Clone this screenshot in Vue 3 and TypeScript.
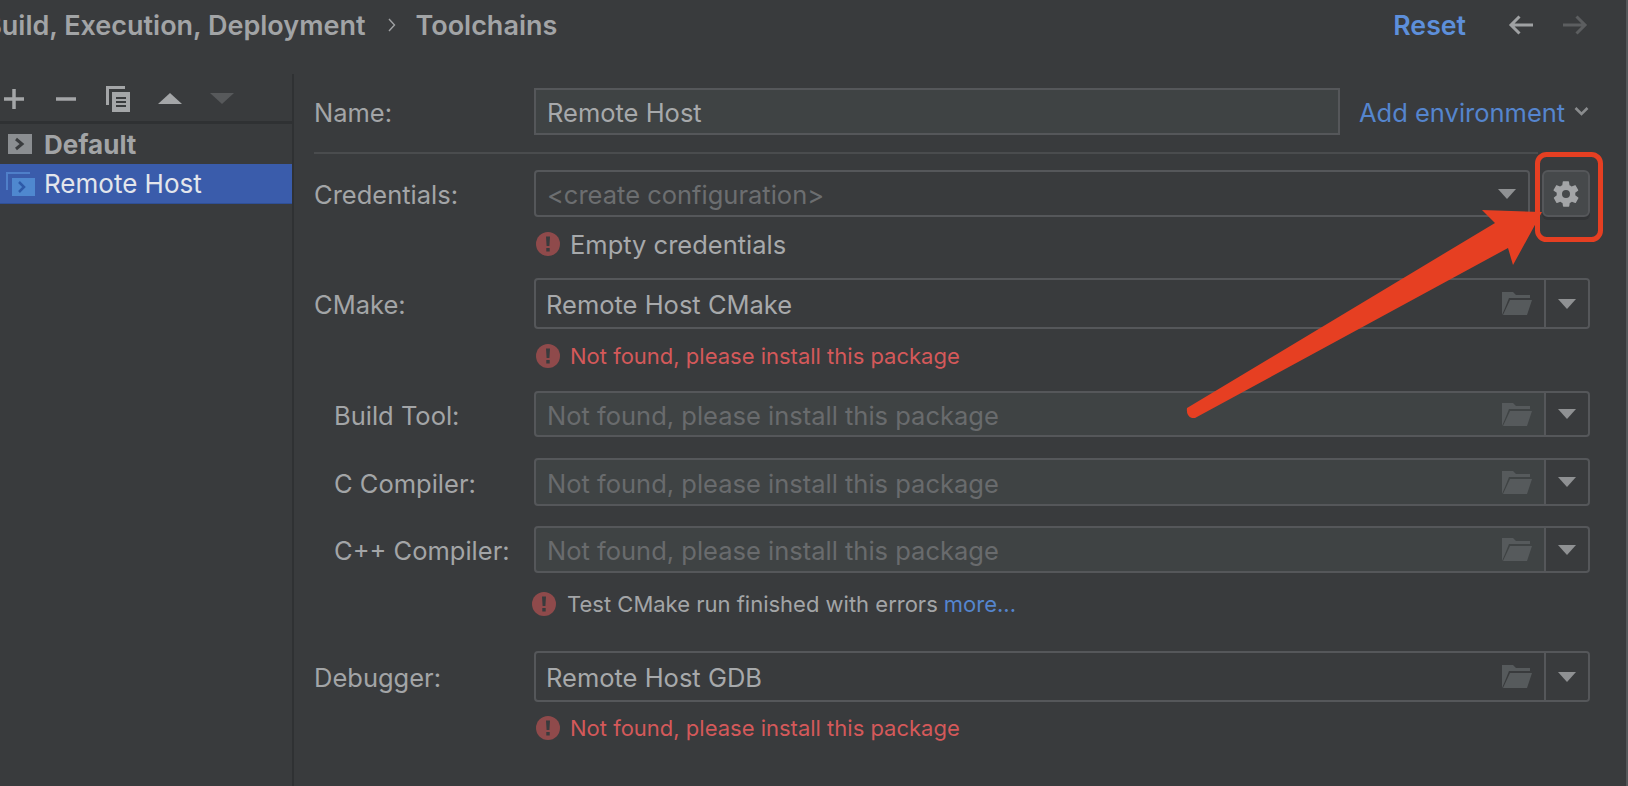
<script setup lang="ts">
interface Field {
  label: string
  cls: string
  value?: string
  placeholder?: string
  msg?: string
}
const fields: Field[] = [
  { label: 'CMake:', cls: 'f-cmake', value: 'Remote Host CMake', msg: 'Not found, please install this package' },
  { label: 'Build Tool:', cls: 'f-build', placeholder: 'Not found, please install this package' },
  { label: 'C Compiler:', cls: 'f-c', placeholder: 'Not found, please install this package' },
  { label: 'C++ Compiler:', cls: 'f-cpp', placeholder: 'Not found, please install this package' },
]
const debuggerField: Field = { label: 'Debugger:', cls: 'f-debug', value: 'Remote Host GDB', msg: 'Not found, please install this package' }
</script>

<template>
  <div class="page">
    <header class="top">
      <div class="crumbs">
        <span>Build, Execution, Deployment</span>
        <svg class="crumb-sep" width="10" height="16" viewBox="0 0 10 16"><path d="M2 2l5.500 6L2 14" fill="none" stroke="#a0a2a4" stroke-width="1.400"/></svg>
        <span class="crumb-last">Toolchains</span>
      </div>
      <div class="top-right">
        <span class="reset">Reset</span>
        <svg class="back" width="26" height="22" viewBox="0 0 26 22"><path d="M25 11H3M11.500 2.500L3 11l8.500 8.500" fill="none" stroke="#9fa1a3" stroke-width="3"/></svg>
        <svg class="fwd" width="26" height="22" viewBox="0 0 26 22"><path d="M1 11h22M14.500 2.500L23 11l-8.500 8.500" fill="none" stroke="#5c5e60" stroke-width="3"/></svg>
      </div>
    </header>

    <div class="body">
      <aside class="side">
        <div class="toolbar">
          <svg width="20" height="20" viewBox="0 0 20 20"><path d="M10 0v20M0 10h20" stroke="#a4a6a8" stroke-width="3.500"/></svg>
          <svg class="tb-minus" width="20" height="20" viewBox="0 0 20 20"><path d="M0 10h20" stroke="#a4a6a8" stroke-width="3.500"/></svg>
          <svg class="tb-copy" width="24" height="26" viewBox="0 0 24 26"><path d="M1.500 19V1.500H19" fill="none" stroke="#a4a6a8" stroke-width="3"/><path fill-rule="evenodd" d="M6 6h18v20H6zM10 11v2h10v-2zM10 15v2h10v-2zM10 19v2h10v-2z" fill="#a4a6a8"/></svg>
          <svg class="tb-up" width="24" height="11" viewBox="0 0 24 11"><path d="M12 0l12 11H0z" fill="#a4a6a8"/></svg>
          <svg class="tb-down" width="24" height="11" viewBox="0 0 24 11"><path d="M0 0h24L12 11z" fill="#57595b"/></svg>
        </div>
        <div class="tree-row default">
          <svg width="24" height="20" viewBox="0 0 24 20"><rect width="24" height="20" fill="#8b8e91"/><path d="M8 5l6 5-6 5" fill="none" stroke="#3a3c3e" stroke-width="3"/></svg>
          <span>Default</span>
        </div>
        <div class="tree-row selected">
          <svg class="remote-icon" width="29" height="24" viewBox="0 0 29 24"><path d="M1 18V1h23" fill="none" stroke="#4f7fc9" stroke-width="2"/><rect x="6" y="6" width="23" height="18" fill="#4f88cf"/><path d="M13 10l5 5-5 5" fill="none" stroke="#2e5aa8" stroke-width="2.500"/></svg>
          <span>Remote Host</span>
        </div>
      </aside>

      <main class="form">
        <div class="row r-name">
          <label class="label">Name:</label>
          <div class="box name-box"><span class="txt">Remote Host</span></div>
          <span class="add-env txt">Add environment</span>
          <svg class="chev" width="15" height="9" viewBox="0 0 15 9"><path d="M1.500 1l6 6 6-6" fill="none" stroke="#8a8c8e" stroke-width="2.600"/></svg>
        </div>
        <div class="rule"></div>
        <div class="row r-cred">
          <label class="label">Credentials:</label>
          <div class="box cred-box">
            <span class="ph ph-cred txt">&lt;create configuration&gt;</span>
            <svg class="tri" width="18" height="10" viewBox="0 0 18 10"><path d="M0 0h18L9 10z" fill="#8f9193"/></svg>
          </div>
          <button class="gear-btn">
            <svg width="30" height="30" viewBox="0 0 24 24"><path fill="#a3a5a7" d="M19.400 13a7.600 7.600 0 0 0 0-2l2.200-1.700a.5.500 0 0 0 .1-.7l-2-3.500a.5.500 0 0 0-.6-.2l-2.600 1a7.600 7.600 0 0 0-1.700-1l-.4-2.700a.5.500 0 0 0-.5-.4h-4a.5.500 0 0 0-.5.400l-.4 2.700a7.600 7.600 0 0 0-1.700 1l-2.600-1a.5.500 0 0 0-.6.200l-2 3.500a.5.500 0 0 0 .1.700L4.600 11a7.600 7.600 0 0 0 0 2l-2.200 1.700a.5.500 0 0 0-.1.700l2 3.500c.1.200.4.300.6.200l2.600-1c.5.400 1.100.7 1.700 1l.4 2.700c0 .2.300.4.500.4h4c.2 0 .5-.2.500-.4l.4-2.700c.6-.3 1.200-.6 1.700-1l2.600 1c.2.100.5 0 .6-.2l2-3.500a.5.500 0 0 0-.1-.7zM12 15.200a3.200 3.200 0 1 1 0-6.400 3.200 3.200 0 0 1 0 6.400z"/></svg>
          </button>
        </div>
        <div class="msg m-cred">
          <svg class="err" width="24" height="24" viewBox="0 0 24 24"><circle cx="12" cy="12" r="12" fill="#8f4a4b"/><path d="M10 4.500h4L13.400 14h-2.800zM10.300 16h3.400v3.500h-3.400z" fill="#393b3d"/></svg>
          <span class="msg-neutral">Empty credentials</span>
        </div>

        <template v-for="f in fields" :key="f.label">
          <div class="row" :class="f.cls">
            <label class="label" :class="{ indented: f.placeholder }">{{ f.label }}</label>
            <div class="box path-box" :class="{ disabled: f.placeholder }">
              <span v-if="f.value" class="val txt">{{ f.value }}</span>
              <span v-else class="ph txt">{{ f.placeholder }}</span>
              <svg class="folder" width="30" height="23" viewBox="0 0 30 23"><path d="M0 23V0h11l3 3h14v3H7L3 16z" fill="#565a5c"/><path d="M8 8h22l-5 15H1z" fill="#565a5c"/></svg>
              <div class="drop"><svg width="18" height="10" viewBox="0 0 18 10"><path d="M0 0h18L9 10z" fill="#8f9193"/></svg></div>
            </div>
          </div>
          <div v-if="f.msg" class="msg msg-red m-cmake">
            <svg class="err" width="24" height="24" viewBox="0 0 24 24"><circle cx="12" cy="12" r="12" fill="#8f4a4b"/><path d="M10 4.500h4L13.400 14h-2.800zM10.300 16h3.400v3.500h-3.400z" fill="#393b3d"/></svg>
            <span>{{ f.msg }}</span>
          </div>
        </template>

        <div class="msg m-test">
          <svg class="err" width="24" height="24" viewBox="0 0 24 24"><circle cx="12" cy="12" r="12" fill="#8f4a4b"/><path d="M10 4.500h4L13.400 14h-2.800zM10.300 16h3.400v3.500h-3.400z" fill="#393b3d"/></svg>
          <span class="test-text">Test CMake run finished with errors</span>
          <span class="more">more...</span>
        </div>

        <div class="row" :class="debuggerField.cls">
          <label class="label">{{ debuggerField.label }}</label>
          <div class="box path-box">
            <span class="val txt">{{ debuggerField.value }}</span>
            <svg class="folder" width="30" height="23" viewBox="0 0 30 23"><path d="M0 23V0h11l3 3h14v3H7L3 16z" fill="#565a5c"/><path d="M8 8h22l-5 15H1z" fill="#565a5c"/></svg>
            <div class="drop"><svg width="18" height="10" viewBox="0 0 18 10"><path d="M0 0h18L9 10z" fill="#8f9193"/></svg></div>
          </div>
        </div>
        <div class="msg msg-red m-debug">
          <svg class="err" width="24" height="24" viewBox="0 0 24 24"><circle cx="12" cy="12" r="12" fill="#8f4a4b"/><path d="M10 4.500h4L13.400 14h-2.800zM10.300 16h3.400v3.500h-3.400z" fill="#393b3d"/></svg>
          <span>{{ debuggerField.msg }}</span>
        </div>
      </main>
    </div>

    <svg class="annot" width="1628" height="786" viewBox="0 0 1628 786">
      <rect x="1537.500" y="154.500" width="63" height="85" rx="9" fill="none" stroke="#e63f22" stroke-width="5"/>
      <path d="M1542 212L1482 210L1495 223L1187 408Q1186 416 1192 418L1195 418L1508 248L1513 265Z" fill="#e63f22"/>
    </svg>
  </div>
</template>

<style>
html, body { margin: 0; background: #393b3d; }
</style>

<style scoped>
.page {
  position: relative;
  width: 1628px;
  height: 786px;
  overflow: hidden;
  box-sizing: border-box;
  background: #393b3d;
  border-right: 2px solid #55575a;
  font-family: Inter, "Liberation Sans", sans-serif;
  font-size: 25.5px;
  color: #a7a9ab;
  display: flex;
  flex-direction: column;
}
.top {
  height: 74px;
  flex: none;
  display: flex;
  justify-content: space-between;
  align-items: flex-start;
  padding-top: 8px;
  box-sizing: border-box;
}
.crumbs {
  display: flex;
  align-items: center;
  height: 34px;
  margin-left: -16px;
  font-size: 27px;
  font-weight: 600;
  color: #a2a4a6;
  white-space: nowrap;
}
.crumb-sep { margin-left: 22px; }
.crumb-last { margin-left: 18px; }
.top-right {
  display: flex;
  align-items: center;
  height: 34px;
  margin-right: 38px;
}
.reset { color: #5d8fdb; font-weight: 600; font-size: 26.7px; }
.back { margin-left: 42px; }
.fwd { margin-left: 28px; }

.body { flex: 1; display: flex; min-height: 0; }
.side {
  width: 294px;
  flex: none;
  box-sizing: border-box;
  border-right: 2px solid #2f3133;
  font-size: 26px;
}
.toolbar {
  height: 50px;
  box-sizing: border-box;
  padding-left: 4px;
  padding-top: 2px;
  display: flex;
  align-items: center;
  border-bottom: 3px solid #2f3133;
}
.tb-minus { margin-left: 32px; }
.tb-copy { margin-left: 30px; }
.tb-up { margin-left: 28px; }
.tb-down { margin-left: 28px; }
.tree-row {
  height: 40px;
  display: flex;
  align-items: center;
  white-space: nowrap;
}
.default { padding-left: 8px; gap: 12px; font-weight: 700; color: #a2a4a6; }
.selected {
  background: #3a5cab;
  color: #e3e6ec;
  padding-left: 6px;
  gap: 9px;
  border-bottom: 1px solid #2f4f96;
  box-sizing: border-box;
}

.form {
  flex: 1;
  box-sizing: border-box;
  padding-left: 20px;
  padding-top: 14px;
  min-width: 0;
}
.row {
  display: flex;
  align-items: center;
}
.label { width: 220px; flex: none; white-space: nowrap; color: #a3a5a7; padding-top: 2px; box-sizing: border-box; }
.label.indented { padding-left: 20px; }
.txt { padding-top: 2px; }
.box {
  box-sizing: border-box;
  height: 100%;
  display: flex;
  align-items: center;
  white-space: nowrap;
  border: 2px solid #55575a;
  border-radius: 4px;
}
.r-name { height: 47px; }
.name-box {
  width: 806px;
  background: #3f4344;
  border-radius: 0;
  padding-left: 11px;
  color: #a7a9ab;
}
.add-env { margin-left: 19px; color: #5585ce; white-space: nowrap; }
.chev { margin-left: 9px; }
.rule { height: 2px; background: #4a4c4e; margin-top: 17px; width: 1224px; }
.r-cred { height: 47px; margin-top: 16px; }
.cred-box { width: 996px; justify-content: space-between; padding: 0 12px 0 9px; }
.ph { color: #696b6d; padding-left: 2px; }
.ph-cred { color: #6c6e70; }
.gear-btn {
  width: 48px;
  height: 47px;
  margin-left: 12px;
  padding: 0;
  display: flex;
  align-items: center;
  justify-content: center;
  background: #46494b;
  border: 2px solid #55575a;
  border-radius: 6px;
  box-shadow: 0 3px 0 #323436;
}
.msg {
  display: flex;
  align-items: center;
  gap: 10px;
  margin-left: 222px;
  height: 24px;
  white-space: nowrap;
}
.msg-neutral { color: #a7a9ab; }
.msg-red { color: #d4595a; font-size: 22px; }
.m-cred { margin-top: 15px; }
.f-cmake { height: 51px; margin-top: 22px; }
.m-cmake { margin-top: 15px; }
.f-build { height: 46px; margin-top: 23px; }
.f-c { height: 48px; margin-top: 21px; }
.f-cpp { height: 47px; margin-top: 20px; }
.m-test { margin-top: 19px; margin-left: 218px; gap: 11px; font-size: 22px; }
.test-text { color: #a3a5a7; }
.more { color: #5585ce; margin-left: -5px; }
.f-debug { height: 51px; margin-top: 35px; }
.m-debug { margin-top: 14px; }
.path-box { width: 1056px; padding-left: 9px; position: relative; }
.val { color: #a7a9ab; padding-left: 1px; }
.disabled { background: #3f4344; }
.folder { margin-left: auto; margin-right: 12px; flex: none; }
.drop {
  width: 42px;
  height: 100%;
  flex: none;
  background: #393b3d;
  border-left: 2px solid #55575a;
  border-radius: 0 3px 3px 0;
  display: flex;
  align-items: center;
  justify-content: center;
}
.annot { position: absolute; left: 0; top: 0; pointer-events: none; }
</style>
